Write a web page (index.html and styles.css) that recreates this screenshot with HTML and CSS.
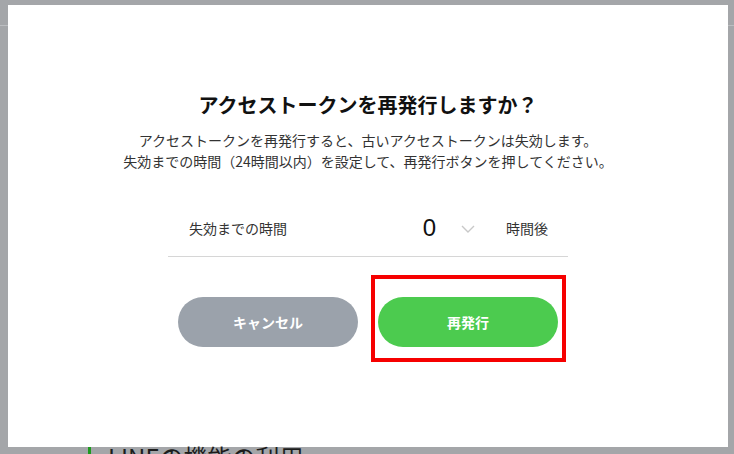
FILE: index.html
```html
<!DOCTYPE html>
<html lang="ja">
<head>
    <meta charset="UTF-8">
    <meta name="viewport" content="width=device-width, initial-scale=1.0">
    <title>アクセストークンの再発行</title>
    <link rel="stylesheet" href="styles.css">
</head>
<body>
    <div class="modal">
        <h2 class="modal-title">アクセストークンを再発行しますか？</h2>
        <p class="modal-desc">
            アクセストークンを再発行すると、古いアクセストークンは失効します。<br>
            失効までの時間（24時間以内）を設定して、再発行ボタンを押してください。
        </p>
        <div class="expire-row">
            <span class="expire-label">失効までの時間</span>
            <span class="expire-select">
                <span class="expire-value">0</span>
                <svg class="chevron" width="14" height="8" viewBox="0 0 14 8">
                    <path d="M1 1l6 6 6-6" fill="none" stroke="#c8c8c8" stroke-width="1.4"/>
                </svg>
            </span>
            <span class="expire-unit">時間後</span>
        </div>
        <div class="actions">
            <button class="btn btn-cancel">キャンセル</button>
            <div class="highlight-wrap">
                <button class="btn btn-confirm">再発行</button>
                <span class="highlight"></span>
            </div>
        </div>
    </div>
    <h1 class="page-heading">LINEの機能の利用</h1>
</body>
</html>
```

FILE: styles.css
```css
body {
    margin: 0;
    height: 454px;
    overflow: hidden;
    font-family: "Noto Sans CJK JP", "Liberation Sans", sans-serif;
    background: linear-gradient(#bcbec1, #bcbec1) no-repeat 0 25px / 100% 1px, #a4a6a9;
}

.modal {
    margin: 5px 6px 0 8px;
    height: 442px;
    box-sizing: border-box;
    padding-top: 85px;
    background: #fff;
    text-align: center;
}

.modal-title {
    margin: 0;
    font-size: 20px;
    line-height: 30px;
    font-weight: bold;
    color: #111;
}

.modal-desc {
    margin: 10px 0 0;
    font-size: 14px;
    line-height: 21px;
    color: #333;
}

.expire-row {
    display: flex;
    align-items: center;
    width: 400px;
    height: 57px;
    margin: 28px auto 0;
    padding: 0 20px 0 21px;
    box-sizing: border-box;
    border-bottom: 1px solid #d6d6d6;
    font-size: 14px;
    color: #333;
}

.expire-label {
    flex: 1;
    text-align: left;
}

.expire-select {
    display: flex;
    align-items: center;
    gap: 25px;
    margin-right: 31px;
}

.expire-value {
    font-family: "Liberation Sans", sans-serif;
    font-size: 24px;
    color: #111;
}

.chevron {
    display: block;
    margin-top: 2px;
}

.actions {
    display: flex;
    justify-content: center;
    gap: 20px;
    margin-top: 40px;
}

.btn {
    width: 180px;
    height: 50px;
    border: none;
    border-radius: 25px;
    font-family: inherit;
    font-size: 14px;
    font-weight: bold;
    color: #fff;
    cursor: pointer;
}

.btn-cancel {
    background: #9ba2ab;
}

.btn-confirm {
    background: #4ccb4f;
}

.highlight-wrap {
    position: relative;
}

.highlight {
    position: absolute;
    top: -22px;
    left: -7px;
    right: -8px;
    bottom: -15px;
    border: 4px solid #f60000;
    pointer-events: none;
}

.page-heading {
    margin: 0 0 0 88px;
    padding: 0 0 0 17px;
    border-left: 3px solid #1e9a1e;
    font-size: 24px;
    font-weight: normal;
    line-height: 0.8;
    color: #1c1c1c;
}
```
